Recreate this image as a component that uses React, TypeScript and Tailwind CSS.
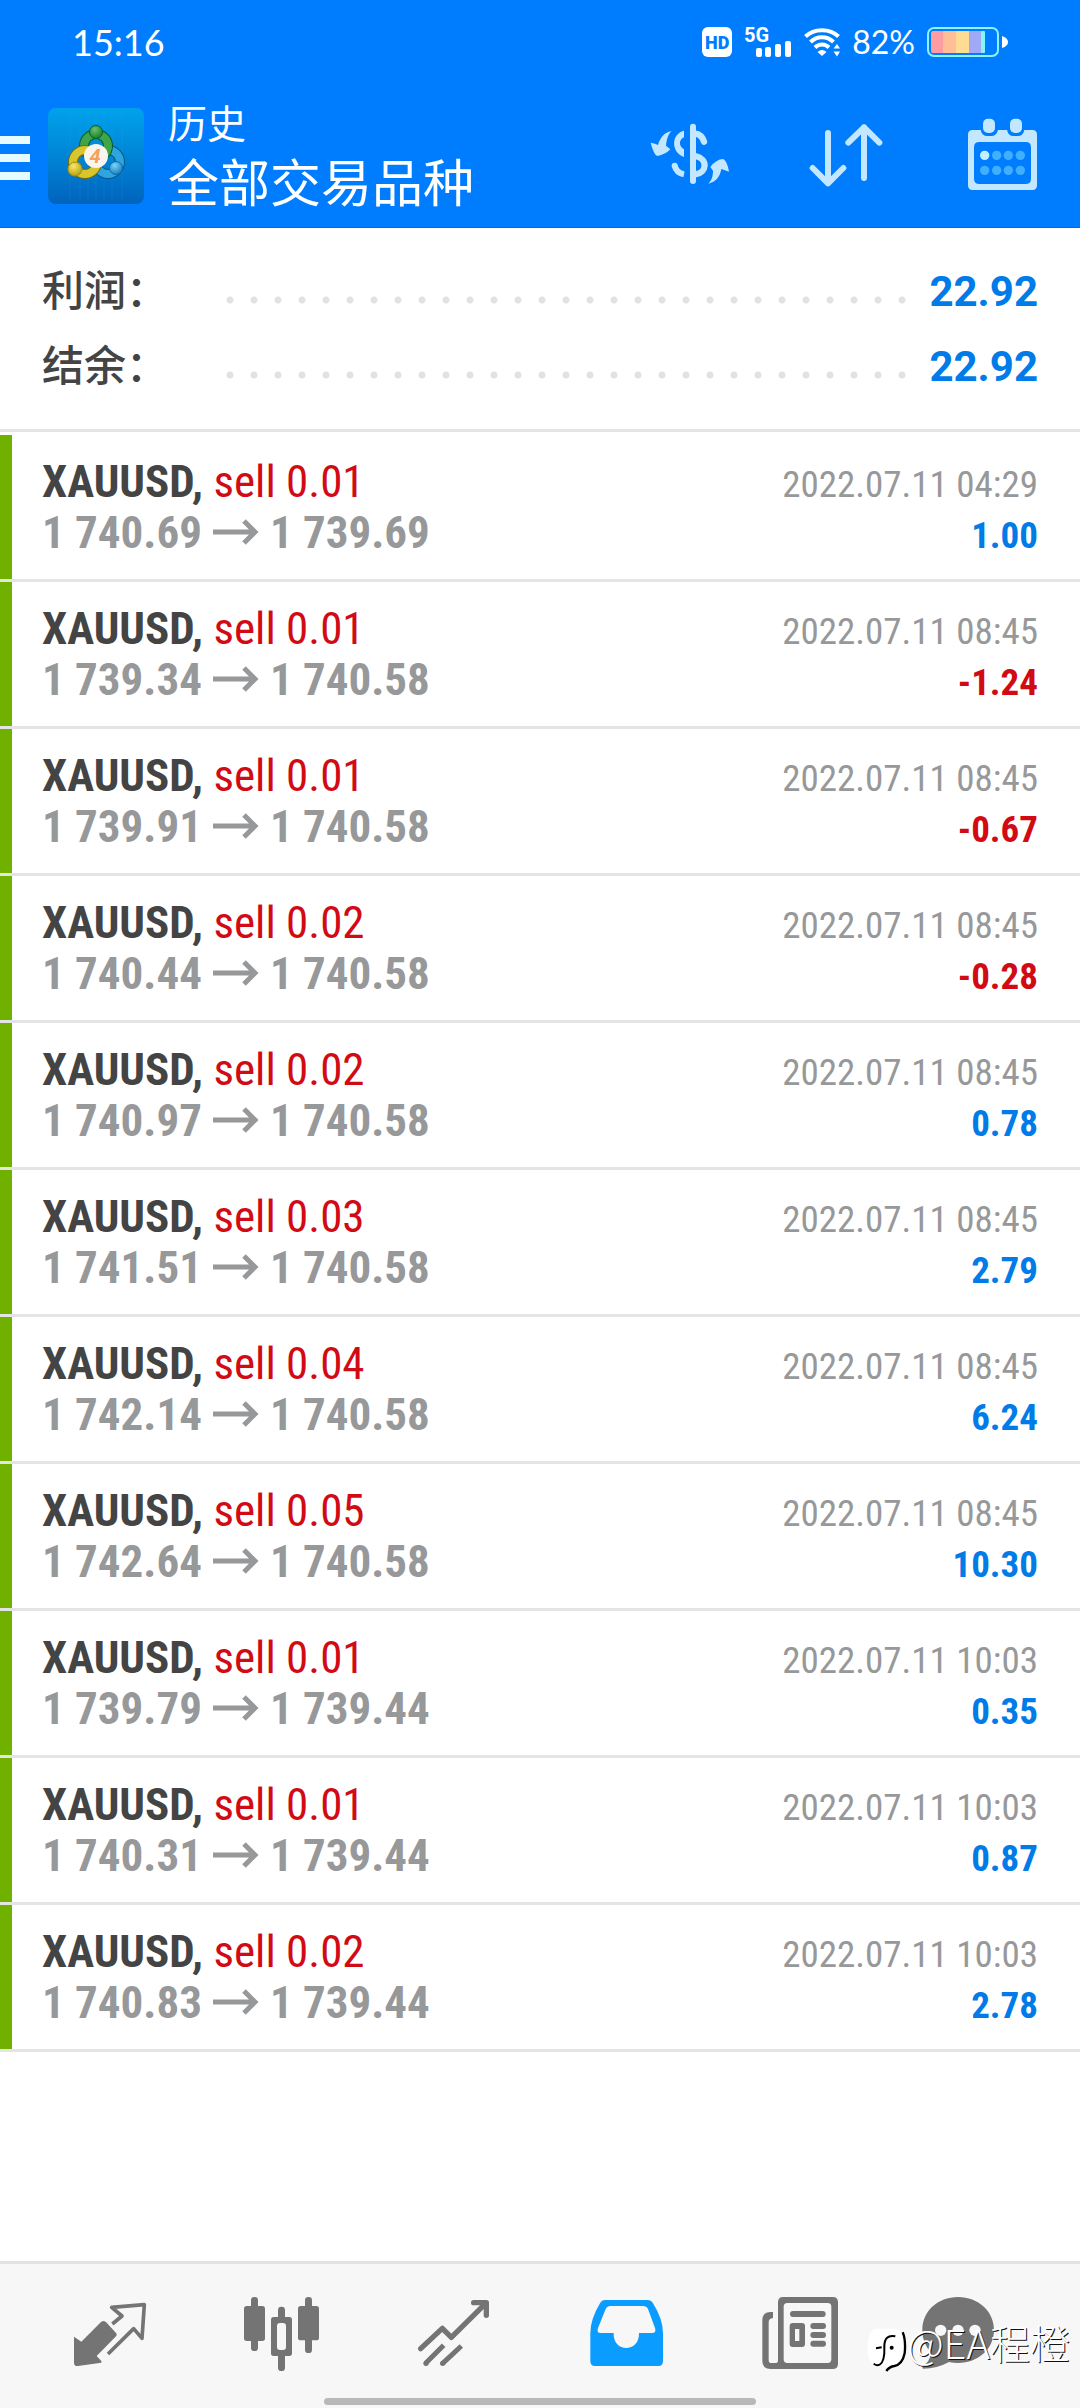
import type { ReactNode } from 'react'

type Deal = {
  volume: string
  open: string
  close: string
  time: string
  profit: string
}

const DEALS: Deal[] = [
  { volume: '0.01', open: '1 740.69', close: '1 739.69', time: '2022.07.11 04:29', profit: '1.00' },
  { volume: '0.01', open: '1 739.34', close: '1 740.58', time: '2022.07.11 08:45', profit: '-1.24' },
  { volume: '0.01', open: '1 739.91', close: '1 740.58', time: '2022.07.11 08:45', profit: '-0.67' },
  { volume: '0.02', open: '1 740.44', close: '1 740.58', time: '2022.07.11 08:45', profit: '-0.28' },
  { volume: '0.02', open: '1 740.97', close: '1 740.58', time: '2022.07.11 08:45', profit: '0.78' },
  { volume: '0.03', open: '1 741.51', close: '1 740.58', time: '2022.07.11 08:45', profit: '2.79' },
  { volume: '0.04', open: '1 742.14', close: '1 740.58', time: '2022.07.11 08:45', profit: '6.24' },
  { volume: '0.05', open: '1 742.64', close: '1 740.58', time: '2022.07.11 08:45', profit: '10.30' },
  { volume: '0.01', open: '1 739.79', close: '1 739.44', time: '2022.07.11 10:03', profit: '0.35' },
  { volume: '0.01', open: '1 740.31', close: '1 739.44', time: '2022.07.11 10:03', profit: '0.87' },
  { volume: '0.02', open: '1 740.83', close: '1 739.44', time: '2022.07.11 10:03', profit: '2.78' },
]

const SUMMARY = [
  { label: '利润：', value: '22.92' },
  { label: '结余：', value: '22.92' },
]

function StatusBar() {
  return (
    <div className="flex h-[84px] items-center justify-between px-[72px] font-['Lato',sans-serif] text-white">
      <span className="text-[36px]">15:16</span>
      <div className="flex items-center gap-3">
        <span className="flex size-[30px] items-center justify-center rounded-md bg-white font-['Roboto',sans-serif] text-[18px] font-black text-[#007dff]">
          HD
        </span>
        <svg viewBox="0 -6 48 42" className="h-[42px] w-12" fill="#fff">
          <text x="0" y="15" fontFamily="Roboto, sans-serif" fontSize="20" fontWeight="700">5G</text>
          <rect x="12" y="21" width="6" height="9" rx="2" />
          <rect x="21" y="20" width="6" height="10" rx="2" />
          <rect x="31" y="17" width="6" height="13" rx="2" />
          <rect x="41" y="14" width="6" height="16" rx="2" />
        </svg>
        <svg viewBox="0 0 36 30" className="h-[30px] w-9" fill="none" stroke="#fff" strokeWidth="4">
          <path d="M1.5 9.5C10 1 26 1 34.500 9.500" />
          <path d="M6.500 15C13 8.500 23 8.500 29.500 15" />
          <path d="M11 20.500C15 16.500 21 16.500 25 20.500" />
          <path d="M13.500 25Q18 21 22.500 25L18 29Z" fill="#fff" stroke="none" />
          <path d="M29.500 21.500L33 17L36 21.500ZM29.500 24.500L33 29.500L36 24.500Z" fill="#fff" stroke="none" />
        </svg>
        <span className="text-[32px]">82%</span>
        <svg viewBox="0 0 81 30" className="h-[30px] w-[81px]">
          <rect x="1" y="1" width="70" height="28" rx="6" fill="none" stroke="#8ff3ff" strokeWidth="2" />
          <rect x="4" y="4" width="13" height="22" rx="2" fill="#ff9ba3" />
          <rect x="16" y="4" width="14" height="22" fill="#ffbd98" />
          <rect x="29" y="4" width="13" height="22" fill="#ffdc94" />
          <rect x="42" y="4" width="13" height="22" fill="#a1a9f6" />
          <rect x="54" y="4" width="4" height="22" rx="1" fill="#86f7f0" />
          <path d="M75 9Q81 11 81 15T75 21Z" fill="#fff" />
        </svg>
      </div>
    </div>
  )
}

function Logo() {
  return (
    <svg viewBox="0 0 96 96" className="size-24">
      <defs>
        <linearGradient id="tile" x1="0" y1="0" x2="0" y2="1">
          <stop offset="0" stopColor="#00a2ec" />
          <stop offset="0.45" stopColor="#0088d8" />
          <stop offset="1" stopColor="#0063bd" />
        </linearGradient>
        <radialGradient id="green" cx="0.4" cy="0.3" r="0.8">
          <stop offset="0" stopColor="#6cc06a" />
          <stop offset="1" stopColor="#0b7a2c" />
        </radialGradient>
        <radialGradient id="yellow" cx="0.4" cy="0.3" r="0.8">
          <stop offset="0" stopColor="#f7ea63" />
          <stop offset="1" stopColor="#b39508" />
        </radialGradient>
        <radialGradient id="blue" cx="0.4" cy="0.3" r="0.8">
          <stop offset="0" stopColor="#7fd3f7" />
          <stop offset="1" stopColor="#0774bd" />
        </radialGradient>
      </defs>
      <rect width="96" height="96" rx="8" fill="url(#tile)" />
      <path d="M32 4V92M40 4V92M48 4V92M56 4V92M64 4V92M74 4V92M22 4V92" stroke="#27b4ee" strokeOpacity="0.15" />
      <g fill="none">
        <circle cx="60" cy="54" r="12" stroke="#075887" strokeWidth="10" />
        <circle cx="60" cy="54" r="12" stroke="#2fa5e0" strokeWidth="8" />
        <circle cx="48" cy="38" r="12" stroke="#075c2d" strokeWidth="10" />
        <circle cx="48" cy="38" r="12" stroke="#3ea548" strokeWidth="8" />
        <circle cx="37" cy="54" r="12" stroke="#766b0b" strokeWidth="10" />
        <circle cx="37" cy="54" r="12" stroke="#d8c62c" strokeWidth="8" />
      </g>
      <circle cx="48" cy="24" r="6.500" fill="url(#green)" stroke="#075c2d" />
      <circle cx="27" cy="61" r="7" fill="url(#yellow)" stroke="#a58f12" />
      <circle cx="68" cy="60" r="6.500" fill="url(#blue)" stroke="#0a6aa5" />
      <circle cx="48" cy="48" r="12" fill="#f8f5ef" />
      <text x="47" y="55" textAnchor="middle" fontFamily="Roboto, sans-serif" fontSize="20" fontWeight="700" fontStyle="italic" fill="#f5a05c">
        4
      </text>
    </svg>
  )
}

function HeaderButton({ label, viewBox, children }: { label: string; viewBox: string; children: ReactNode }) {
  return (
    <button type="button" aria-label={label}>
      <svg viewBox={viewBox} className="h-20 w-[84px]" fill="#c2e7ff">
        {children}
      </svg>
    </button>
  )
}

function AppBar() {
  return (
    <div className="flex h-[143px] items-center pr-9">
      <button type="button" aria-label="菜单">
        <svg viewBox="0 0 30 48" className="h-12 w-[30px]" fill="#e6fbff">
          <rect y="4" width="30" height="8" />
          <rect y="22" width="30" height="8" />
          <rect y="40" width="30" height="8" />
        </svg>
      </button>
      <div className="ml-[18px]">
        <Logo />
      </div>
      <div className="ml-6 flex-1 pb-[7px] font-['Noto_Sans_CJK_SC',sans-serif] text-white">
        <p className="text-[39px] leading-[56px]">历史</p>
        <h1 className="text-[51px] leading-[62px]">全部交易品种</h1>
      </div>
      <div className="flex gap-[72px]">
        <HeaderButton label="货币" viewBox="24 48 252 240">
          <path d="M95 93C84 103 80 118 78 137L91 148Q76 164 52 168Q42 166 32 128L45 131L54 135C60 113 73 97 95 93Z" />
          <path d="M205 251C216 240 219 226 219 212L211 201Q228 178 250 177Q262 184 267 215L255 211L244 207C240 230 228 246 205 251Z" />
          <rect x="150" y="71" width="18" height="181" rx="9" />
          <path d="M132 92V112C116 119 116 140 132 148V171C94 158 91 103 132 92Z" />
          <path d="M104 197C107 211 117 220 132 223" fill="none" stroke="#c2e7ff" strokeWidth="18" />
          <circle cx="104" cy="197" r="9" />
          <path d="M166 101C180 103 188 112 192 125M166 168C205 176 201 219 166 223" fill="none" stroke="#c2e7ff" strokeWidth="19" strokeLinecap="round" />
        </HeaderButton>
        <HeaderButton label="排序" viewBox="492 48 252 240">
          <path
            d="M564 99V250M518 204L564 250L610 204M672 234V82M625 128L672 82L718 128"
            fill="none"
            stroke="#c2e7ff"
            strokeWidth="18"
            strokeLinecap="round"
            strokeLinejoin="round"
          />
        </HeaderButton>
        <HeaderButton label="日期" viewBox="960 48 252 240">
          <path
            fillRule="evenodd"
            d="M998 90H1022Q1026 108 1042 108H1054Q1069 108 1074 90H1101Q1105 108 1120 108H1134Q1149 108 1153 90H1177Q1191 90 1191 104V256Q1191 270 1177 270H998Q984 270 984 256V104Q984 90 998 90ZM1018 126Q1002 126 1002 142V236Q1002 252 1018 252H1157Q1173 252 1173 236V142Q1173 126 1157 126Z"
          />
          <rect x="1029" y="56" width="36" height="43" rx="15" />
          <rect x="1110" y="56" width="36" height="43" rx="15" />
          {[166, 211].map((cy) =>
            [1034, 1070, 1105, 1141].map((cx) => (
              <circle key={`${cx}-${cy}`} cx={cx} cy={cy} r="14" fill={cx === 1034 && cy === 166 ? '#c2f0ff' : '#3fb0ff'} />
            )),
          )}
        </HeaderButton>
      </div>
    </div>
  )
}

function Summary() {
  return (
    <dl className="mb-[3px] border-b-[3px] border-[#e4e4e4] px-[42px] pt-[26px] pb-[25px]">
      {SUMMARY.map((s) => (
        <div key={s.label} className="flex items-baseline">
          <dt className="w-44 font-['Noto_Sans_CJK_SC',sans-serif] text-[42px] leading-none font-medium text-[#444]">{s.label}</dt>
          <div className="mt-4 h-2 flex-1 self-center bg-[radial-gradient(circle,#e2e2e2_3px,transparent_4px)] bg-[length:24px_8px] bg-repeat-x" />
          <dd className="ml-4 font-['Roboto',sans-serif] text-[42px] leading-[75px] font-bold text-[#007be8]">{s.value}</dd>
        </div>
      ))}
    </dl>
  )
}

function DealRow({ deal }: { deal: Deal }) {
  const loss = deal.profit.startsWith('-')

  return (
    <li className="flex border-b-[3px] border-[#e4e4e4]">
      <div className="w-3 bg-[#70b100]" />
      <div className="flex-1 py-[21px] pr-[42px] pl-[30px]">
        <div className="flex items-baseline justify-between">
          <p className="text-[45px] leading-[51px] font-bold text-[#444]">
            XAUUSD, <span className="font-normal text-[#d20a14]">sell {deal.volume}</span>
          </p>
          <time className="text-[37px] leading-none text-[#97989a]">{deal.time}</time>
        </div>
        <div className="flex items-baseline justify-between font-bold">
          <p className="text-[45px] leading-[51px] text-[#97989a]">
            {deal.open}
            <svg viewBox="0 0 46 32" className="mx-[11px] inline-block h-8 w-[46px] align-baseline" fill="none" stroke="currentColor" strokeWidth="5">
              <path d="M0 16H43M31 5L42 16L31 27" />
            </svg>
            {deal.close}
          </p>
          <span className={loss ? 'text-[37px] leading-none text-[#d20a14]' : 'text-[37px] leading-none text-[#007be8]'}>{deal.profit}</span>
        </div>
      </div>
    </li>
  )
}

function NavButton({ label, viewBox, active, children }: { label: string; viewBox: string; active?: boolean; children: ReactNode }) {
  return (
    <button type="button" aria-label={label} className={active ? 'flex justify-center text-[#0a9cff]' : 'flex justify-center text-[#747474]'}>
      <svg viewBox={viewBox} className="h-20 w-[120px]" fill="currentColor">
        {children}
      </svg>
    </button>
  )
}

function BottomNav() {
  return (
    <nav className="relative border-t-[3px] border-[#e2e2e2] bg-[#f7f7f7] pt-[30px] pb-[3px]">
      <div className="grid grid-cols-6 px-6">
        <NavButton label="行情" viewBox="150 162 360 240">
          <path d="M222 290L244 305L300 249Q310 238 320 248L348 279Q353 285 348 289L290 348L304 363V368L234 378Q222 379 222 368Z" />
          <path d="M337 252L366 228L335 202L433 194L426 295L401 266L324 342" fill="none" stroke="currentColor" strokeWidth="11" strokeLinejoin="round" />
        </NavButton>
        <NavButton label="图表" viewBox="666 162 360 240">
          <rect x="732" y="198" width="63" height="105" rx="8" />
          <rect x="753" y="171" width="21" height="162" rx="10" />
          <rect x="813" y="231" width="63" height="117" rx="8" />
          <rect x="834" y="200" width="21" height="193" rx="10" />
          <rect x="831" y="249" width="27" height="81" rx="9" fill="#f7f7f7" />
          <rect x="894" y="198" width="63" height="103" rx="8" />
          <rect x="915" y="171" width="21" height="168" rx="10" />
        </NavButton>
        <NavButton label="交易" viewBox="102 162 360 240">
          <g fill="none" stroke="currentColor" strokeWidth="16" strokeLinecap="round" strokeLinejoin="round">
            <path d="M182 326L247 265L274 292L374 193" />
            <path d="M341 188H379V226" />
          </g>
          <path d="M197 370L251 316M248 370L304 318" stroke="currentColor" strokeWidth="15" />
          <circle cx="198" cy="370" r="8" />
          <circle cx="248" cy="370" r="8" />
        </NavButton>
        <NavButton label="历史" viewBox="618 162 360 240" active>
          <path
            fillRule="evenodd"
            d="M735 180H862Q873 180 879 190Q909 238 909 280V364Q909 378 895 378H705Q691 378 691 364V280Q691 238 720 190Q726 180 735 180ZM752 198Q741 198 737 207L714 264Q709 279 722 279H761C758 339 839 339 837 279H876Q890 279 885 264L864 207Q860 198 849 198Z"
          />
        </NavButton>
        <NavButton label="新闻" viewBox="54 162 360 240">
          <path
            fillRule="evenodd"
            d="M190 171H338Q354 171 354 187V371Q354 387 338 387H152Q127 387 127 362V240Q127 216 152 216H159V234Q146 235 146 247V359Q146 369 154 369H168Q174 369 174 360V187Q174 171 190 171ZM202 189Q191 189 191 200V358Q191 369 202 369H323Q334 369 334 358V200Q334 189 323 189Z"
          />
          <path d="M219 222H308M280 258H309M280 285H309M280 311H309" stroke="currentColor" strokeWidth="18" strokeLinecap="round" />
          <path fillRule="evenodd" d="M218 249H246Q255 249 255 258V312Q255 321 246 321H218Q209 321 209 312V258Q209 249 218 249ZM225 267V303H238V267Z" />
        </NavButton>
        <NavButton label="更多" viewBox="570 162 360 240">
          <path d="M714 171C775 171 822 214 822 270S775 369 714 369Q700 369 687 366Q651 386 609 386Q606 384 608 380Q630 366 633 337Q607 311 607 270C607 214 653 171 714 171Z" />
          <g fill="#f7f7f7">
            <circle cx="662" cy="271" r="17" />
            <circle cx="714" cy="271" r="17" />
            <circle cx="765" cy="271" r="17" />
          </g>
        </NavButton>
      </div>
      <div className="mx-auto mt-6 h-[7px] w-2/5 rounded-full bg-[#b9b9b9]" />

      {/* Author mark over the bar */}
      <div className="absolute right-2.5 bottom-9 flex items-end font-['Noto_Sans_CJK_SC',sans-serif] text-[40px] leading-[60px] text-white">
        <svg viewBox="436 264 120 132" className="h-11 w-10">
          <path d="M462 266H520Q550 270 552 320Q552 366 518 378L494 396V378H462Q438 370 438 320Q438 270 462 266Z" fill="#fff" />
          <path d="M543 277Q553 300 549 340Q542 374 518 378Q503 380 494 393" fill="none" stroke="#000" strokeWidth="7" />
          <path d="M521 289Q488 282 488 320Q490 365 474 374Q463 378 456 371M463 325L480 322" fill="none" stroke="#000" strokeWidth="6" />
          <circle cx="510" cy="323" r="6" />
        </svg>
        <span className="font-light [text-shadow:1px_1px_0_#111]">@EA程橙</span>
      </div>
    </nav>
  )
}

export default function App() {
  return (
    <div className="flex min-h-screen flex-col bg-white font-['Roboto_Condensed','Liberation_Sans_Narrow','Roboto',sans-serif]">
      <header className="border-b border-[#006ad8] bg-[#007dff]">
        <StatusBar />
        <AppBar />
      </header>
      <main className="flex-1">
        <Summary />
        <ul>
          {DEALS.map((d, i) => (
            <DealRow key={i} deal={d} />
          ))}
        </ul>
      </main>
      <BottomNav />
    </div>
  )
}
